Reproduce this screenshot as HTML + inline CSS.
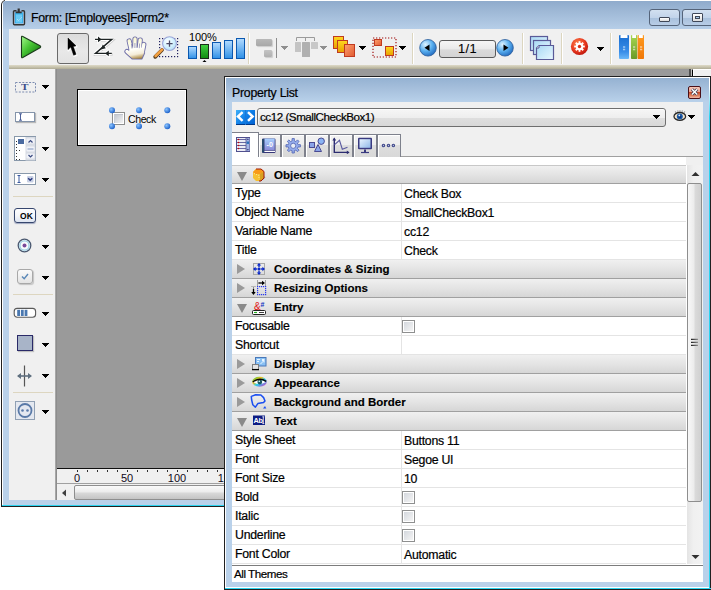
<!DOCTYPE html>
<html><head><meta charset="utf-8">
<style>
*{margin:0;padding:0;box-sizing:border-box}
html,body{width:711px;height:590px;overflow:hidden;background:#fff;font-family:"Liberation Sans",sans-serif;color:#000;position:relative}
div{position:absolute}
svg{display:block}
.t{font-size:12.3px;letter-spacing:-0.25px;white-space:nowrap;line-height:14px;color:#000;-webkit-text-stroke:0.2px #000}
/* main window */
#mw-b{left:1px;top:0;width:720px;height:507px;background:#202020;border-top-left-radius:5px}
#mw-top{left:5px;top:0;width:720px;height:1px;background:#fff}
#mw-w{left:2px;top:1px;width:720px;height:505px;background:#fff;border-top-left-radius:4px}
#mw-f{left:3px;top:1px;width:720px;height:504px;background:#b9d1ea;border-top-left-radius:3px}
#mw-c{left:2px;top:505px;width:720px;height:1px;background:#2ad4f0}
#mtitle{left:3px;top:1px;width:720px;height:28px;background:linear-gradient(#8fabcc,#9cb6d4 30%,#b6cee8);border-top-left-radius:3px}
#tb{left:9px;top:29px;width:710px;height:36px;background:#f0f0f0}
#tan{left:9px;top:65px;width:710px;height:4px;background:linear-gradient(#dedac8,#c8c4ae 50%,#aeaa94)}
#pal{left:9px;top:69px;width:46px;height:431px;background:#f0f0f0}
#palb{left:55px;top:69px;width:2px;height:431px;background:linear-gradient(90deg,#b4b4b4,#808080)}
#canvas{left:57px;top:69px;width:632px;height:399px;background:#9a9a9a}
#ruler{left:57px;top:468px;width:632px;height:16px;background:#f0f0f0;border-top:1px solid #101010;border-bottom:1px solid #a0a0a0}
#hs{left:57px;top:484px;width:632px;height:16px;background:#f0f0f0}
.sep{top:33px;width:2px;height:31px;background:linear-gradient(90deg,#dcd6c0 50%,#fff 50%)}
.dd{width:7px;height:4px;background:linear-gradient(#000,#000) 0 0/7px 1px no-repeat,linear-gradient(#000,#000) 1px 1px/5px 1px no-repeat,linear-gradient(#000,#000) 2px 2px/3px 1px no-repeat,linear-gradient(#000,#000) 3px 3px/1px 1px no-repeat}
.psep{left:13px;width:40px;height:1px;background:#ddd6c0}
/* property window */
#pw-b{left:224px;top:76px;width:500px;height:514px;background:#202020}
#pw-w{left:225px;top:77px;width:485px;height:511px;background:#fff}
#pw-f{left:226px;top:78px;width:483px;height:509px;background:#b9d1ea}
#pw-c{left:225px;top:588px;width:486px;height:1px;background:#2ad4f0}
#pw-cr{left:709px;top:77px;width:1px;height:512px;background:linear-gradient(#fff 0,#fff 10px,#2ad4f0 40px)}
#ptitle{left:226px;top:78px;width:483px;height:24px;background:linear-gradient(#95b2d2,#a4bedb 40%,#b9d1ea)}
#pin{left:232px;top:102px;width:471px;height:480px;background:#f0f0f0}
#pwhite{left:232px;top:157px;width:454px;height:8px;background:#fff}
#tabline{left:232px;top:156px;width:471px;height:1px;background:#a0a0a0}
.tab{top:134px;width:23px;height:22px;background:linear-gradient(#f4f4f4,#e4e4e4 50%,#d8d8d8);border:1px solid #8c8e94;border-bottom:none}
.tab svg{position:absolute;left:2px;top:2px}
#tabsel{left:232px;top:132px;width:27px;height:25px;background:#fff;border-top:1px solid #7e818c;border-right:1px solid #7e818c}
.row{left:232px;width:454px;height:19px;background:#fff;border-bottom:1px solid #e4e4e4}
.row .k{left:3px;top:2px;font-size:12.3px;letter-spacing:-0.25px;line-height:14px;white-space:nowrap;color:#000;-webkit-text-stroke:0.2px #000}
.row .v{left:172px;top:3px;font-size:12.3px;letter-spacing:-0.25px;line-height:14px;white-space:nowrap;color:#000;-webkit-text-stroke:0.2px #000}
.row .vl{left:169px;top:0;width:1px;height:19px;background:#e4e4e4}
.hdr{left:232px;width:454px;height:19px;background:linear-gradient(#f0f0f0,#e4e4e4 50%,#d6d6d6);border-bottom:1px solid #a0a0a0}
.hdr .n{left:42px;top:2px;font-weight:bold;font-size:11.5px;line-height:14px;white-space:nowrap;color:#000;-webkit-text-stroke:0.15px #000}
.hic{position:absolute;left:18px;top:1px}
.tri-r{left:5px;top:4px;width:0;height:0;border-top:5px solid transparent;border-bottom:5px solid transparent;border-left:8px solid #9a9a9a}
.tri-d{left:5px;top:6px;width:0;height:0;border-left:5px solid transparent;border-right:5px solid transparent;border-top:9px solid #8a8a8a}
.cb{left:170px;top:3px;width:13px;height:13px;border:1px solid #8e8f8f;background:#fff}
.cb i{position:absolute;left:1px;top:1px;width:9px;height:9px;background:linear-gradient(135deg,#d4d8de,#f4f4f4)}
#vs{left:686px;top:165px;width:17px;height:400px;background:linear-gradient(90deg,#e4e4e4,#f0f0f0 40%,#f2f2f2);border-left:1px solid #fff}
#thumb{left:687px;top:183px;width:15px;height:319px;border:1px solid #8e8e8e;border-radius:2px;background:linear-gradient(90deg,#f8f8f8,#ececec 45%,#dadada 55%,#d0d0d0)}
#status{left:232px;top:564px;width:471px;height:18px;background:#fff;border-top:1px solid #fff}
#statusl{left:232px;top:565px;width:471px;height:1px;background:#7c7c7c}

.tab2{top:134px;height:23px;border:1px solid #7e818c;border-bottom:none;background:linear-gradient(#f2f2f2,#eeeeee 45%,#dedede 47%,#d8d8d8);box-shadow:inset 1px 1px #fff}
.ddg{opacity:0.4}

</style></head><body>
<!-- MAIN WINDOW -->
<div id="mw-b"></div><div id="mw-top"></div><div id="mw-w"></div><div id="mw-f"></div><div id="mw-c"></div>
<div id="mtitle"></div>
<div id="tb"></div>
<div id="tan"></div>
<div id="pal"></div>
<div id="palb"></div>
<div id="canvas"></div>
<div id="ruler"></div>
<div id="hs"></div>

<!-- title -->
<div class="t" style="left:31px;top:11px">Form: [Employees]Form2*</div>

<!-- title icon -->
<svg style="position:absolute;left:12px;top:8px" width="14" height="18" viewBox="0 0 14 18"><path d="M4.5 2.8H2.5Q1.5 2.8 1.5 3.8V15.8Q1.5 16.8 2.5 16.8H11.5Q12.5 16.8 12.5 15.8V3.8Q12.5 2.8 11.5 2.8H9.5" fill="none" stroke="#333" stroke-width="1.4"/><rect x="3" y="4.3" width="8" height="11" fill="#3ab2ec"/><rect x="4" y="6.5" width="6" height="8" fill="#6ccaf4"/><path d="M5.6 0.6h2.2v3h1.9v1.7H3.7V3.6h1.9Z" fill="#333"/><path d="M5 11l1.5 1.5 3-3" fill="none" stroke="#c8ecfc" stroke-width="1" stroke-dasharray="1 0.8"/></svg>
<!-- min / max -->
<div style="left:649px;top:9px;width:31px;height:17px;border:1px solid #55647a;border-radius:3px;background:linear-gradient(#d2e0f0,#c2d4ea 50%,#a8c0dc 52%,#b8cde6)"></div>
<div style="left:659px;top:17px;width:11px;height:5px;border:1px solid #404858;border-radius:1px;background:linear-gradient(#fff,#ddd)"></div>
<div style="left:682px;top:9px;width:40px;height:17px;border:1px solid #55647a;border-radius:3px;background:linear-gradient(#d2e0f0,#c2d4ea 50%,#a8c0dc 52%,#b8cde6)"></div>
<div style="left:692px;top:13px;width:11px;height:9px;border:1px solid #404858;border-radius:1px;background:linear-gradient(#fff,#ddd)"></div>
<div style="left:695px;top:16px;width:5px;height:3px;border:1px solid #404858;background:#a8c8e8"></div>

<!-- play -->
<svg style="position:absolute;left:19px;top:34px" width="24" height="26" viewBox="0 0 24 26"><defs><linearGradient id="pg" x1="0" y1="0" x2="1" y2="1"><stop offset="0" stop-color="#a4fa8c"/><stop offset="0.45" stop-color="#44c232"/><stop offset="1" stop-color="#0a640a"/></linearGradient></defs><path d="M2.5 3.2Q2.5 1.8 3.8 2.4L21 11.8Q22.4 12.8 21 13.8L3.8 23.6Q2.5 24.2 2.5 22.8Z" fill="url(#pg)" stroke="#1a3a1a" stroke-width="1.1"/></svg>
<!-- selected button -->
<div style="left:57px;top:33px;width:32px;height:31px;border:1px solid #6a6a6a;border-radius:3px;background:linear-gradient(#dcdcdc,#e4e4e4 40%,#e8e8e8 60%,#e2e2e2)"></div>
<svg style="position:absolute;left:65px;top:36px" width="16" height="22" viewBox="0 0 16 22"><path d="M3 2.3V14L5.9 11.4L8.8 19.6L11.4 18.6L8.6 10.9L11.5 10.2Z" fill="#fff" stroke="#fff" stroke-width="1.8" stroke-linejoin="round" opacity="0.8" transform="translate(0.3,0.6)"/><path d="M3 2V13.6L5.8 11L8.6 19.2L11 18.3L8.3 10.6L11 9.8Z" fill="#000" stroke="#000" stroke-width="0.5" stroke-linejoin="round"/></svg>
<!-- Z -->
<svg style="position:absolute;left:90px;top:33px" width="28" height="28" viewBox="0 0 28 28"><path d="M5.5 7.4H22.5L6.5 21.4H22.5" fill="none" stroke="#b8b8b8" stroke-width="2.5" opacity="0.7"/><path d="M5 6.4H21.8L5.5 20.4H21.8" fill="none" stroke="#fff" stroke-width="3.6" stroke-linejoin="round"/><path d="M8 3.2V9.6L12 6.4Z M18.8 17.2V23.6L14.8 20.4Z M10.6 16.6L16.4 15.4L13 11.2Z" fill="#fff" stroke="#fff" stroke-width="1.6"/><path d="M5 6.4H21.8L5.5 20.4H21.8" fill="none" stroke="#1e2424" stroke-width="1.4"/><path d="M8 3.6V9.2L11.6 6.4Z M18.8 17.6V23.2L15.2 20.4Z M10.8 16.4L15.8 15.2L12.8 11.6Z" fill="#1e2424"/></svg>
<!-- hand -->
<svg style="position:absolute;left:122px;top:34px" width="28" height="28" viewBox="0 0 28 28"><defs><linearGradient id="hg" gradientUnits="userSpaceOnUse" x1="10" y1="4" x2="14" y2="26"><stop offset="0" stop-color="#fbf8d0"/><stop offset="0.5" stop-color="#fffffa"/><stop offset="0.75" stop-color="#f4ecd8"/><stop offset="1" stop-color="#9c7424"/></linearGradient></defs>
<g><path d="M7.2 7L9.5 17" stroke="#6c6ca8" stroke-width="5.2" stroke-linecap="round"/><path d="M13 5L12.8 15" stroke="#6c6ca8" stroke-width="5.2" stroke-linecap="round"/><path d="M18.2 6L17.2 15" stroke="#6c6ca8" stroke-width="5.2" stroke-linecap="round"/><path d="M21.8 10.5L20.5 17" stroke="#6c6ca8" stroke-width="5.2" stroke-linecap="round"/><path d="M5 17.5L10 22" stroke="#6c6ca8" stroke-width="5.2" stroke-linecap="round"/><path d="M8.5 14L21.5 14L22 19L19.5 24.5L10.5 24.5L6.5 19Z" fill="#6c6ca8" stroke="#6c6ca8" stroke-width="2.2" stroke-linejoin="round"/></g>
<g><path d="M7.2 7L9.5 17" stroke="url(#hg)" stroke-width="3.4" stroke-linecap="round"/><path d="M13 5L12.8 15" stroke="url(#hg)" stroke-width="3.4" stroke-linecap="round"/><path d="M18.2 6L17.2 15" stroke="url(#hg)" stroke-width="3.4" stroke-linecap="round"/><path d="M21.8 10.5L20.5 17" stroke="url(#hg)" stroke-width="3.4" stroke-linecap="round"/><path d="M5 17.5L10 22" stroke="url(#hg)" stroke-width="3.4" stroke-linecap="round"/><path d="M8.5 14L21.5 14L22 19L19.5 24.5L10.5 24.5L6.5 19Z" fill="url(#hg)" stroke="url(#hg)" stroke-width="0.4"/></g>
<path d="M10 14.5L9.5 10M12.9 14V9M17.3 14.2L17.6 9.5" stroke="#8a8ab8" stroke-width="0.8"/>
</svg>
<!-- magnifier -->
<svg style="position:absolute;left:152px;top:35px" width="28" height="25" viewBox="0 0 28 25"><g fill="#202060"><rect x="7" y="3" width="1.2" height="1.2"/><rect x="7" y="21" width="1.2" height="1.2"/><rect x="10" y="3" width="1.2" height="1.2"/><rect x="10" y="21" width="1.2" height="1.2"/><rect x="13" y="3" width="1.2" height="1.2"/><rect x="13" y="21" width="1.2" height="1.2"/><rect x="16" y="3" width="1.2" height="1.2"/><rect x="16" y="21" width="1.2" height="1.2"/><rect x="19" y="3" width="1.2" height="1.2"/><rect x="19" y="21" width="1.2" height="1.2"/><rect x="22" y="3" width="1.2" height="1.2"/><rect x="22" y="21" width="1.2" height="1.2"/><rect x="25" y="3" width="1.2" height="1.2"/><rect x="25" y="21" width="1.2" height="1.2"/><rect x="7" y="6" width="1.2" height="1.2"/><rect x="25" y="6" width="1.2" height="1.2"/><rect x="7" y="9" width="1.2" height="1.2"/><rect x="25" y="9" width="1.2" height="1.2"/><rect x="7" y="12" width="1.2" height="1.2"/><rect x="25" y="12" width="1.2" height="1.2"/><rect x="7" y="15" width="1.2" height="1.2"/><rect x="25" y="15" width="1.2" height="1.2"/><rect x="7" y="18" width="1.2" height="1.2"/><rect x="25" y="18" width="1.2" height="1.2"/></g><path d="M3.2 21.8L10 15" stroke="#5a4020" stroke-width="3.8" stroke-linecap="round"/><path d="M3.6 21L10 14.6" stroke="#f4a040" stroke-width="2.6" stroke-linecap="round"/><defs><radialGradient id="lg" cx="0.4" cy="0.35" r="0.7"><stop offset="0" stop-color="#ffffff"/><stop offset="0.5" stop-color="#d8f4ff"/><stop offset="1" stop-color="#b4dcf4"/></radialGradient></defs><circle cx="17.5" cy="8.6" r="6.9" fill="url(#lg)" stroke="#9aa4d8" stroke-width="1.1"/><path d="M17.5 5.6V11.8M14.4 8.7H20.6" stroke="#4a4a68" stroke-width="1.3"/></svg>
<!-- 100% -->
<div class="t" style="left:189px;top:31px;font-size:11px;line-height:12px;letter-spacing:-0.1px;-webkit-text-stroke:0">100%</div>
<svg style="position:absolute;left:187px;top:37px" width="60" height="27" viewBox="0 0 60 27"><defs><linearGradient id="bb" x1="0" y1="0" x2="0" y2="1"><stop offset="0" stop-color="#b4dcff"/><stop offset="1" stop-color="#2e90e6"/></linearGradient><linearGradient id="gb" x1="0" y1="0" x2="0" y2="1"><stop offset="0" stop-color="#40d040"/><stop offset="1" stop-color="#108a10"/></linearGradient></defs>
<rect x="1.5" y="9.5" width="8" height="12" fill="url(#bb)" stroke="#0a58b0"/>
<rect x="13.5" y="7.5" width="8" height="14" fill="url(#gb)" stroke="#1a2a1a"/>
<rect x="25.5" y="5.5" width="8" height="16" fill="url(#bb)" stroke="#0a58b0"/>
<rect x="37.5" y="3.5" width="8" height="18" fill="url(#bb)" stroke="#0a58b0"/>
<rect x="49.5" y="1.5" width="8" height="20" fill="url(#bb)" stroke="#0a58b0"/>
<path d="M15.5 25H19.5L17.5 23Z" fill="#000"/></svg>
<div class="sep" style="left:248px"></div>
<!-- gray align icons -->
<div style="left:256px;top:39px;width:16px;height:7px;background:linear-gradient(#b8b8b8,#a8a8a8);border-radius:1px;box-shadow:1px 1px 1px #ccc"></div>
<div style="left:264px;top:50px;width:8px;height:7px;background:linear-gradient(#c4c4c4,#b0b0b0);border-radius:1px;box-shadow:1px 1px 1px #ccc"></div>
<div style="left:276px;top:38px;width:1px;height:20px;background:#8c8c8c"></div>
<div class="dd ddg" style="left:281px;top:46px"></div>
<svg style="position:absolute;left:294px;top:36px" width="26" height="23" viewBox="0 0 26 23"><path d="M2.5 5V1.5H20.5V5M11.5 1.5V5" fill="none" stroke="#9a9a9a"/><rect x="1" y="6" width="6" height="10" fill="#c4c4c4" rx="0.5"/><rect x="8" y="6" width="8" height="15" fill="#b0b0b0" rx="0.5"/><rect x="17" y="6" width="7" height="7" fill="#c8c8c8" rx="0.5"/></svg>
<div class="dd ddg" style="left:320px;top:46px"></div>
<!-- orange stacks -->
<svg style="position:absolute;left:332px;top:35px" width="25" height="23" viewBox="0 0 25 23"><defs><linearGradient id="yo" x1="0" y1="0" x2="0" y2="1"><stop offset="0" stop-color="#ffd820"/><stop offset="1" stop-color="#e8a000"/></linearGradient><linearGradient id="sa" x1="0" y1="0" x2="1" y2="1"><stop offset="0" stop-color="#ffa070"/><stop offset="1" stop-color="#e05a30"/></linearGradient></defs>
<rect x="1.5" y="1.5" width="10" height="12" fill="url(#yo)" stroke="#c03a20"/>
<rect x="5.5" y="5.5" width="10" height="12" fill="url(#yo)" stroke="#c03a20"/>
<rect x="12.5" y="9.5" width="10" height="12" fill="url(#sa)" stroke="#c03a20"/></svg>
<div class="dd" style="left:359px;top:46px"></div>
<svg style="position:absolute;left:372px;top:37px" width="25" height="21" viewBox="0 0 25 21"><path d="M1 1H24V20H1Z" fill="none" stroke="#a01010" stroke-width="1.2" stroke-dasharray="1.3 1.7"/><rect x="2.5" y="2.5" width="7" height="6" fill="url(#sa)" stroke="#c03a20"/><rect x="13.5" y="9.5" width="8" height="9" fill="url(#yo)" stroke="#c03a20"/></svg>
<div class="dd" style="left:399px;top:46px"></div>
<div class="sep" style="left:412px"></div>
<!-- page nav -->
<svg style="position:absolute;left:418px;top:38px" width="20" height="20" viewBox="0 0 20 20"><defs><radialGradient id="bc" cx="0.35" cy="0.3" r="0.8"><stop offset="0" stop-color="#e0f4ff"/><stop offset="0.5" stop-color="#5ab0f0"/><stop offset="1" stop-color="#1a60b8"/></radialGradient></defs><circle cx="10" cy="9.8" r="8.3" fill="url(#bc)" stroke="#2a5a98" stroke-width="0.8"/><path d="M6.5 9.8L11.5 6.5V13Z" fill="#000"/></svg>
<div style="left:439px;top:40px;width:57px;height:18px;border:1px solid #5a5a5a;border-radius:3px;background:linear-gradient(#f6f6f6,#eaeaea 50%,#dadada 55%,#d4d4d4)"></div>
<div class="t" style="left:458px;top:42px;font-size:12.8px;letter-spacing:0.4px;-webkit-text-stroke:0.1px #000">1/1</div>
<svg style="position:absolute;left:495px;top:38px" width="20" height="20" viewBox="0 0 20 20"><circle cx="10" cy="9.8" r="8.3" fill="url(#bc)" stroke="#2a5a98" stroke-width="0.8"/><path d="M13.5 9.8L8.5 6.5V13Z" fill="#000"/></svg>
<div class="sep" style="left:522px"></div>
<!-- windows -->
<svg style="position:absolute;left:529px;top:35px" width="27" height="27" viewBox="0 0 27 27"><defs><linearGradient id="wg" x1="0" y1="0" x2="1" y2="1"><stop offset="0" stop-color="#a8d8f4"/><stop offset="1" stop-color="#eaf8ff"/></linearGradient></defs>
<rect x="1.5" y="1.5" width="17" height="14" fill="url(#wg)" stroke="#5a5a98" stroke-width="1.2"/>
<rect x="4.5" y="5.5" width="17" height="14" fill="url(#wg)" stroke="#5a5a98" stroke-width="1.2"/>
<path d="M10 10.5H24.5V24.5H7.5V13Z" fill="url(#wg)" stroke="#5a5a98" stroke-width="1.2"/><path d="M7.5 13H10V10.5" fill="#fff" stroke="#5a5a98" stroke-width="1"/></svg>
<div class="sep" style="left:561px"></div>
<!-- red gear -->
<svg style="position:absolute;left:569px;top:36px" width="21" height="21" viewBox="0 0 21 21"><defs><radialGradient id="rg" cx="0.4" cy="0.35" r="0.7"><stop offset="0" stop-color="#ff8a50"/><stop offset="0.6" stop-color="#e83a20"/><stop offset="1" stop-color="#b81008"/></radialGradient></defs><circle cx="10.5" cy="10.5" r="8.6" fill="url(#rg)"/><g fill="#fff"><rect x="9.6" y="5.2" width="1.8" height="3" transform="rotate(0 10.5 10.5)"/><rect x="9.6" y="5.2" width="1.8" height="3" transform="rotate(45 10.5 10.5)"/><rect x="9.6" y="5.2" width="1.8" height="3" transform="rotate(90 10.5 10.5)"/><rect x="9.6" y="5.2" width="1.8" height="3" transform="rotate(135 10.5 10.5)"/><rect x="9.6" y="5.2" width="1.8" height="3" transform="rotate(180 10.5 10.5)"/><rect x="9.6" y="5.2" width="1.8" height="3" transform="rotate(225 10.5 10.5)"/><rect x="9.6" y="5.2" width="1.8" height="3" transform="rotate(270 10.5 10.5)"/><rect x="9.6" y="5.2" width="1.8" height="3" transform="rotate(315 10.5 10.5)"/></g><circle cx="10.5" cy="10.5" r="3.7" fill="#fff"/><circle cx="10.5" cy="10.5" r="1.7" fill="#d83018"/></svg>
<div class="dd" style="left:597px;top:47px"></div>
<div class="sep" style="left:610px"></div>
<!-- books -->
<svg style="position:absolute;left:618px;top:34px" width="28" height="27" viewBox="0 0 28 27"><defs><linearGradient id="b1" x1="0" y1="0" x2="0" y2="1"><stop offset="0" stop-color="#1a6ed0"/><stop offset="0.7" stop-color="#3a8ee8"/><stop offset="1" stop-color="#6ab8f8"/></linearGradient><linearGradient id="b2" x1="0" y1="0" x2="0" y2="1"><stop offset="0" stop-color="#a8d850"/><stop offset="1" stop-color="#6a9a28"/></linearGradient><linearGradient id="b3" x1="0" y1="0" x2="0" y2="1"><stop offset="0" stop-color="#ff9a20"/><stop offset="1" stop-color="#f07808"/></linearGradient></defs>
<rect x="1" y="1" width="10" height="24" rx="1" fill="url(#b1)"/><rect x="2.5" y="1" width="7" height="3" fill="#fff"/>
<rect x="13" y="1" width="6.2" height="24" rx="0.8" fill="url(#b2)"/><rect x="14.2" y="1" width="3.8" height="3" fill="#fff"/>
<rect x="19.6" y="1" width="6.4" height="24" rx="0.8" fill="url(#b3)"/><rect x="20.8" y="1" width="4" height="3" fill="#fff"/>
<path d="M5 13h2.2M5 15.5h2.2M15 13h2.2M15 15.5h2.2M22 13h2.2M22 15.5h2.2" stroke="#fff" stroke-width="1.6" opacity="0.55"/></svg>

<!-- T -->
<svg style="position:absolute;left:14px;top:81px" width="22" height="12" viewBox="0 0 22 12"><rect x="1.5" y="1.5" width="20" height="9.5" fill="none" stroke="#7c8cb0" stroke-width="1" stroke-dasharray="2 1.4"/></svg>
<div style="left:21px;top:82px;font:bold 9px 'Liberation Serif';line-height:10px;color:#3a4e8a;transform:scaleX(1.25);transform-origin:0 0">T</div>
<div class="dd" style="left:42px;top:85px"></div>
<!-- text input -->
<div style="left:15px;top:112px;width:20px;height:10px;border:1px solid #8494aa;background:#fff;box-shadow:1px 1px 1px #b8b8b8"></div>
<svg style="position:absolute;left:18px;top:113px" width="5" height="8" viewBox="0 0 5 8"><path d="M1 0.8H4M2.5 0.8V7.2M1 7.2H4" stroke="#3a5090" stroke-width="0.9"/></svg>
<div class="dd" style="left:42px;top:116px"></div>
<!-- list -->
<svg style="position:absolute;left:14px;top:136px" width="23" height="26" viewBox="0 0 23 26"><rect x="0.5" y="0.5" width="21" height="24" fill="#fff" stroke="#8898aa"/><rect x="11.5" y="1" width="10" height="23.5" fill="#d8dce4"/><rect x="4" y="3" width="6" height="5" fill="#4a6aa0"/><path d="M2.5 5v1M2.5 8v1M2.5 11v1M2.5 14v1M2.5 17v1M2.5 20v1M2.5 23v1M5.5 14v1M5.5 23v1" stroke="#333" stroke-width="1"/><rect x="12.5" y="2.5" width="8" height="5" rx="1" fill="#f0f2f8"/><rect x="12.5" y="10.5" width="8" height="5" rx="1" fill="#f0f2f8"/><rect x="13.5" y="12" width="6" height="2" fill="#b8c4dc"/><rect x="12.5" y="17.5" width="8" height="5" rx="1" fill="#f0f2f8"/><path d="M14.5 6.5L16.5 4.5L18.5 6.5M14.5 19L16.5 21L18.5 19" fill="none" stroke="#3a4a80" stroke-width="1.2"/></svg>
<div class="dd" style="left:42px;top:147px"></div>
<!-- combo -->
<svg style="position:absolute;left:14px;top:173px" width="23" height="13" viewBox="0 0 23 13"><rect x="0.5" y="0.5" width="21" height="11" fill="#fff" stroke="#8898aa"/><path d="M3.5 2.5H6.5M5 2.5V9.5M3.5 9.5H6.5" stroke="#3a5aa0"/><rect x="13" y="3" width="6.5" height="6.5" rx="1" fill="#c8d0e4"/><path d="M14.2 5.2L16.2 7.3L18.3 5.2" fill="none" stroke="#2a3a80" stroke-width="1.4"/></svg>
<div class="dd" style="left:42px;top:178px"></div>
<div class="psep" style="top:196px"></div>
<!-- OK -->
<div style="left:14px;top:208px;width:22px;height:15px;border:1.5px solid #36466e;border-radius:3px;background:linear-gradient(#fdfdfd,#f4f6fa 50%,#dde4f0);box-shadow:0 1px 1px #a0a8c0"></div>
<div style="left:20px;top:211px;font:bold 8.5px 'Liberation Sans';line-height:10px;color:#000;letter-spacing:0.2px">OK</div>
<div class="dd" style="left:42px;top:214px"></div>
<!-- radio -->
<svg style="position:absolute;left:17px;top:238px" width="15" height="15" viewBox="0 0 15 15"><circle cx="7.5" cy="7.5" r="6.3" fill="#f8fbfd" stroke="#4a5870" stroke-width="1.3"/><circle cx="7.5" cy="7.5" r="4.6" fill="none" stroke="#9cd0e4" stroke-width="1.4"/><circle cx="7.5" cy="7.5" r="2" fill="#7a4a9a"/></svg>
<div class="dd" style="left:42px;top:245px"></div>
<!-- checkbox -->
<div style="left:17px;top:269px;width:16px;height:15px;border:1px solid #a8a8a8;border-radius:3px;background:linear-gradient(#fafafa,#e4e4e4);box-shadow:1px 1px 1px #c4c4c4"></div>
<svg style="position:absolute;left:20px;top:272px" width="10" height="9" viewBox="0 0 10 9"><path d="M2 4.5L4.2 6.8L8 2" fill="none" stroke="#5a88b8" stroke-width="1.4"/></svg>
<div class="dd" style="left:42px;top:276px"></div>
<div class="psep" style="top:294px"></div>
<!-- progress -->
<svg style="position:absolute;left:13px;top:307px" width="24" height="12" viewBox="0 0 24 12"><rect x="1.2" y="1.4" width="21.4" height="8.8" rx="3" fill="#fff" stroke="#5a5a5a" stroke-width="1.1"/><rect x="4.2" y="2.8" width="2.8" height="6.2" fill="#4a78b0"/><rect x="7.9" y="2.8" width="2.8" height="6.2" fill="#4a78b0"/><rect x="11.6" y="2.8" width="2.8" height="6.2" fill="#4a78b0"/></svg>
<div class="dd" style="left:42px;top:312px"></div>
<!-- rect -->
<div style="left:17px;top:335px;width:16px;height:16px;border:1px solid #2a2a68;background:#a8b4c8;box-shadow:1px 1px 1px #c0c0c0"></div>
<div class="dd" style="left:42px;top:343px"></div>
<!-- splitter -->
<svg style="position:absolute;left:16px;top:365px" width="18" height="22" viewBox="0 0 18 22"><path d="M8.5 0.5V21.5" stroke="#555" stroke-width="1.2"/><path d="M2 11H15" stroke="#607080" stroke-width="1.6"/><path d="M1 11L5 8V14Z M16 11L12 8V14Z" fill="#607080"/></svg>
<div class="dd" style="left:42px;top:374px"></div>
<div class="psep" style="top:392px"></div>
<!-- circle -->
<div style="left:15px;top:401px;width:20px;height:19px;border:1px solid #90a0b4;background:#e4e8f0"></div>
<svg style="position:absolute;left:16px;top:402px" width="18" height="17" viewBox="0 0 18 17"><circle cx="9" cy="8.5" r="6.5" fill="none" stroke="#5a7aa8" stroke-width="1.8"/><circle cx="6.5" cy="8.5" r="1.3" fill="#5a7aa8"/><circle cx="11.5" cy="8.5" r="1.3" fill="#5a7aa8"/></svg>
<div class="dd" style="left:42px;top:410px"></div>

<!-- form rect -->
<div style="left:77px;top:89px;width:110px;height:57px;border:1px solid #000;background:#f0f0f0"></div>
<div style="left:78px;top:90px;width:108px;height:55px;border:1px solid #fff"></div>
<div style="left:112px;top:112px;width:13px;height:13px;border:1px solid #8e8f8f;background:#fff"></div>
<div style="left:114px;top:114px;width:9px;height:9px;background:linear-gradient(135deg,#c4c8d0,#f4f4f4);border-top:1px solid #c0c4cc;border-left:1px solid #c8ccd4"></div>
<div class="t" style="left:128px;top:112px;font-size:10.6px;letter-spacing:-0.45px;-webkit-text-stroke:0">Check</div>
<svg style="position:absolute;left:106px;top:104px" width="66" height="28" viewBox="0 0 66 28"><defs><radialGradient id="hd" cx="0.35" cy="0.35" r="0.7"><stop offset="0" stop-color="#8ac4ff"/><stop offset="1" stop-color="#1a5ec8"/></radialGradient></defs>
<circle cx="6" cy="6.2" r="3" fill="url(#hd)"/><circle cx="33" cy="6.2" r="3" fill="url(#hd)"/><circle cx="61.3" cy="6.2" r="3" fill="url(#hd)"/>
<circle cx="6" cy="22.3" r="3" fill="url(#hd)"/><circle cx="33" cy="22.3" r="3" fill="url(#hd)"/><circle cx="61.3" cy="22.3" r="3" fill="url(#hd)"/></svg>
<!-- right panel piece -->
<div style="left:689px;top:69px;width:3px;height:8px;background:linear-gradient(90deg,#505050,#505050 66%,#c0c0c0 66%)"></div>
<div style="left:692px;top:69px;width:30px;height:8px;background:#f0f0f0;border-left:1px solid #000;border-top:1px solid #fff"></div>
<div style="left:693px;top:69px;width:1px;height:8px;background:#fff"></div>
<!-- ruler -->
<svg style="position:absolute;left:57px;top:469px" width="632" height="15" viewBox="0 0 632 15"><g stroke="#303030" stroke-width="1">
<path d="M20.5 1V3"/><path d="M30.5 1V3"/><path d="M40.5 1V3"/><path d="M50.5 1V3"/><path d="M60.5 1V3"/><path d="M70.5 1V3"/><path d="M80.5 1V3"/><path d="M90.5 1V3"/><path d="M100.5 1V3"/><path d="M110.5 1V3"/><path d="M120.5 1V3"/><path d="M130.5 1V3"/><path d="M140.5 1V3"/><path d="M150.5 1V3"/><path d="M160.5 1V3"/><path d="M170.5 1V3"/><path d="M180.5 1V3"/><path d="M190.5 1V3"/><path d="M200.5 1V3"/><path d="M210.5 1V3"/><path d="M220.5 1V3"/><path d="M230.5 1V3"/><path d="M240.5 1V3"/><path d="M250.5 1V3"/><path d="M260.5 1V3"/><path d="M270.5 1V3"/><path d="M280.5 1V3"/><path d="M290.5 1V3"/><path d="M300.5 1V3"/><path d="M310.5 1V3"/><path d="M320.5 1V3"/><path d="M330.5 1V3"/><path d="M340.5 1V3"/><path d="M350.5 1V3"/><path d="M360.5 1V3"/><path d="M370.5 1V3"/><path d="M380.5 1V3"/><path d="M390.5 1V3"/><path d="M400.5 1V3"/><path d="M410.5 1V3"/><path d="M420.5 1V3"/><path d="M430.5 1V3"/><path d="M440.5 1V3"/><path d="M450.5 1V3"/><path d="M460.5 1V3"/><path d="M470.5 1V3"/><path d="M480.5 1V3"/><path d="M490.5 1V3"/><path d="M500.5 1V3"/><path d="M510.5 1V3"/><path d="M520.5 1V3"/><path d="M530.5 1V3"/><path d="M540.5 1V3"/><path d="M550.5 1V3"/><path d="M560.5 1V3"/><path d="M570.5 1V3"/><path d="M580.5 1V3"/><path d="M590.5 1V3"/><path d="M600.5 1V3"/><path d="M610.5 1V3"/><path d="M620.5 1V3"/><path d="M630.5 1V3"/></g><text x="20" y="13" text-anchor="middle" font-family="Liberation Sans" font-size="11" fill="#10081a">0</text><text x="70" y="13" text-anchor="middle" font-family="Liberation Sans" font-size="11" fill="#10081a">50</text><text x="120" y="13" text-anchor="middle" font-family="Liberation Sans" font-size="11" fill="#10081a">100</text><text x="170" y="13" text-anchor="middle" font-family="Liberation Sans" font-size="11" fill="#10081a">150</text><text x="220" y="13" text-anchor="middle" font-family="Liberation Sans" font-size="11" fill="#10081a">200</text><text x="270" y="13" text-anchor="middle" font-family="Liberation Sans" font-size="11" fill="#10081a">250</text><text x="320" y="13" text-anchor="middle" font-family="Liberation Sans" font-size="11" fill="#10081a">300</text><text x="370" y="13" text-anchor="middle" font-family="Liberation Sans" font-size="11" fill="#10081a">350</text><text x="420" y="13" text-anchor="middle" font-family="Liberation Sans" font-size="11" fill="#10081a">400</text><text x="470" y="13" text-anchor="middle" font-family="Liberation Sans" font-size="11" fill="#10081a">450</text><text x="520" y="13" text-anchor="middle" font-family="Liberation Sans" font-size="11" fill="#10081a">500</text><text x="570" y="13" text-anchor="middle" font-family="Liberation Sans" font-size="11" fill="#10081a">550</text><text x="620" y="13" text-anchor="middle" font-family="Liberation Sans" font-size="11" fill="#10081a">600</text></svg>
<!-- h scrollbar -->
<svg style="position:absolute;left:60px;top:489px" width="8" height="8" viewBox="0 0 8 8"><path d="M2 4L6 0.5V7.5Z" fill="#404040"/></svg>
<div style="left:74px;top:485px;width:620px;height:15px;border:1px solid #8e8e8e;border-radius:2px;background:linear-gradient(#fafafa,#ececec 45%,#d8d8d8 55%,#c4c4c4)"></div>


<!-- PROPERTY WINDOW -->
<div id="pw-b"></div><div id="pw-w"></div><div id="pw-f"></div><div id="pw-c"></div><div id="pw-cr"></div>
<div id="ptitle"></div>
<div class="t" style="left:232px;top:86px">Property List</div>
<div id="pin"></div>
<div id="tabline"></div>
<div style="left:688px;top:86px;width:13px;height:13px;border:1px solid #4a1018;border-radius:2px;background:linear-gradient(#f8c8b8,#e8a090 45%,#c84828 50%,#e08868 80%,#f0b8a8)"></div>
<svg style="position:absolute;left:690px;top:88px" width="9" height="9" viewBox="0 0 9 9"><path d="M2 1.3L7.2 6.5M7.2 1.3L2 6.5" stroke="#3a3a50" stroke-width="2.9"/><path d="M2 1.3L7.2 6.5M7.2 1.3L2 6.5" stroke="#fff" stroke-width="1.5"/></svg>
<div style="left:236px;top:110px;width:19px;height:15px;background:linear-gradient(135deg,#40b0f8,#1080e8 50%,#0060d0);border-bottom:1px solid #003888"></div>
<div style="left:245px;top:110px;width:1px;height:15px;background:#1a78d8"></div>
<svg style="position:absolute;left:236px;top:110px" width="19" height="15" viewBox="0 0 19 15"><path d="M6.6 2.2L2 6.5L6.6 10.8M12 2.2L16.6 6.5L12 10.8" fill="none" stroke="#fff" stroke-width="2.5"/></svg>
<div style="left:257px;top:108px;width:409px;height:19px;border:1px solid #6e6e6e;border-radius:3px;background:linear-gradient(#f6f6f6,#eeeeee 50%,#dedede 55%,#d8d8d8)"></div>
<div style="left:257px;top:108px;width:409px;height:19px;border-radius:3px;border-top:1px solid #fff;border-left:1px solid #fff;transform:translate(1px,1px);width:407px;height:17px;opacity:.7"></div>
<div class="t" style="left:260px;top:110px;font-size:11.6px;letter-spacing:-0.45px">cc12 (SmallCheckBox1)</div>
<div class="dd" style="left:653px;top:115px"></div>
<svg style="position:absolute;left:673px;top:109px" width="14" height="14" viewBox="0 0 14 14"><path d="M3 4.2L2.3 2.2M5 3.4L4.8 1.3M7 3.2V1.1M9 3.4L9.3 1.3M11 4.2L11.8 2.2" stroke="#8a8a8a" stroke-width="0.8"/><ellipse cx="6.8" cy="7.4" rx="5.8" ry="3.9" fill="#f4e4cc" stroke="#2a2a2a" stroke-width="1.3"/><circle cx="6.8" cy="7.4" r="3" fill="#1a5aa8"/><circle cx="6.8" cy="7.6" r="1.6" fill="#0c3a80"/><circle cx="6.3" cy="6.4" r="0.9" fill="#e8f4ff"/></svg>
<div class="dd" style="left:688px;top:115px"></div>

<div id="pwhite"></div>
<div id="tabsel"></div>
<div class="tab2" style="left:258px;width:23px"></div>
<div class="tab2" style="left:281px;width:24px"></div>
<div class="tab2" style="left:305px;width:24px"></div>
<div class="tab2" style="left:329px;width:24px"></div>
<div class="tab2" style="left:353px;width:24px"></div>
<div class="tab2" style="left:377px;width:24px"></div>
<!-- tab icons -->
<svg style="position:absolute;left:236px;top:137px" width="14" height="15" viewBox="0 0 14 15"><rect x="0.5" y="0.5" width="13" height="14" fill="#ececf4" stroke="#50508e"/><path d="M1 2.5H10M1 5.5H10M1 8.5H10M1 11.5H10" stroke="#5a5a98" stroke-width="0.9"/><rect x="10" y="1" width="3.5" height="13" fill="#a4b4e4"/><path d="M10 0.5V14.5" stroke="#50508e" stroke-width="0.8"/><circle cx="2.5" cy="2.5" r="0.8" fill="#c00"/><circle cx="2.5" cy="5.5" r="0.8" fill="#c00"/><circle cx="2.5" cy="8.5" r="0.8" fill="#c00"/><circle cx="2.5" cy="11.5" r="0.8" fill="#c00"/><rect x="10.6" y="4.5" width="2.4" height="2.4" fill="#2a70b8"/><path d="M10.6 2.8L11.8 1.4L13 2.8Z M10.6 12.2L11.8 13.6L13 12.2Z" fill="#2a2a70"/></svg>
<svg style="position:absolute;left:261px;top:137px" width="16" height="17" viewBox="0 0 16 17"><defs><linearGradient id="bk" x1="0" y1="0" x2="0" y2="1"><stop offset="0" stop-color="#a8d0ff"/><stop offset="1" stop-color="#8a8ad8"/></linearGradient></defs><rect x="1" y="1.5" width="13.5" height="14.5" rx="1.2" fill="#363678"/><rect x="1" y="2" width="2.2" height="13.5" fill="#2a4a70"/><rect x="3.5" y="1.6" width="10.2" height="11.6" fill="url(#bk)"/><rect x="3.4" y="13.8" width="10.6" height="1.2" fill="#fff"/><text x="5.6" y="10" font-family="Liberation Sans" font-size="7" font-weight="bold" fill="#fff">-0</text></svg>
<svg style="position:absolute;left:285px;top:137px" width="17" height="18" viewBox="0 0 17 18"><path d="M13.08 7.71 L15.41 7.64 L15.41 9.96 L13.08 9.89 L12.42 11.48 L14.12 13.07 L12.47 14.72 L10.88 13.02 L9.29 13.68 L9.36 16.01 L7.04 16.01 L7.11 13.68 L5.52 13.02 L3.93 14.72 L2.28 13.07 L3.98 11.48 L3.32 9.89 L0.99 9.96 L0.99 7.64 L3.32 7.71 L3.98 6.12 L2.28 4.53 L3.93 2.88 L5.52 4.58 L7.11 3.92 L7.04 1.59 L9.36 1.59 L9.29 3.92 L10.88 4.58 L12.47 2.88 L14.12 4.53 L12.42 6.12Z" fill="#94acec" stroke="#5a6cb8" stroke-width="0.9" stroke-linejoin="round"/><circle cx="8.2" cy="8.8" r="2.6" fill="#e8ecf4" stroke="#5a6cb8" stroke-width="0.9"/></svg>
<svg style="position:absolute;left:308px;top:136px" width="18" height="17" viewBox="0 0 18 17"><rect x="1.5" y="6.5" width="5" height="5" fill="#8aa4e8" stroke="#4a4a92"/><circle cx="13.2" cy="5.2" r="3.2" fill="#8ab4f4" stroke="#4a4a92"/><path d="M10 8.5L13.5 15.5H6.5Z" fill="#8aa4e8" stroke="#4a4a92" stroke-linejoin="round"/></svg>
<svg style="position:absolute;left:331px;top:137px" width="19" height="17" viewBox="0 0 19 17"><path d="M3.3 1.5V15.4H17.5" fill="none" stroke="#2c2c70" stroke-width="1.4"/><path d="M3.3 0.6L1.4 3.4H5.2Z M18.6 15.4L15.8 13.5V17.3Z" fill="#2c2c70"/><path d="M3.6 7.6L8.5 3.3L11.3 12.2L16.5 10.3" fill="none" stroke="#5a5aa0" stroke-width="1.1"/></svg>
<svg style="position:absolute;left:357px;top:137px" width="16" height="17" viewBox="0 0 16 17"><rect x="1" y="0.8" width="14" height="11.5" rx="1" fill="#3a3a80"/><rect x="2.5" y="2.2" width="11" height="8.6" fill="url(#mon)"/><path d="M7 12.5H9V15H7Z" fill="#3a3a80"/><path d="M4 15.5H12" stroke="#3a3a80" stroke-width="1.2"/><defs><linearGradient id="mon" x1="0" y1="0" x2="1" y2="1"><stop offset="0" stop-color="#e8f4ff"/><stop offset="1" stop-color="#90b8e8"/></linearGradient></defs></svg>
<svg style="position:absolute;left:381px;top:143px" width="16" height="5" viewBox="0 0 16 5"><circle cx="2.5" cy="2.5" r="1.2" fill="#b8c0e0" stroke="#40488a" stroke-width="1.1"/><circle cx="7.5" cy="2.5" r="1.2" fill="#b8c0e0" stroke="#40488a" stroke-width="1.1"/><circle cx="12.4" cy="2.5" r="1.2" fill="#b8c0e0" stroke="#40488a" stroke-width="1.1"/></svg>
<div style="left:232px;top:165px;width:454px;height:1px;background:#c8c8c8"></div>
<div class="hdr" style="top:166px;height:18px"><div class="tri-d"></div><svg class="hic" width="18" height="17" viewBox="0 0 18 17"><path d="M13.5 8.5L15.5 10.5L13 13Z" fill="#8a8a8a" opacity="0.6"/><path d="M3 5L6 2H11L14 4.5V11L11 14H6L3 11Z" fill="#f6c030"/><path d="M3 5L6 2H11L14 4.5L10 7H5Z" fill="#f89a18"/><path d="M10 7L14 4.5V11L11 14H10Z" fill="#d8a020"/><path d="M6 2H11L14 4.5V11L11 14H9" fill="none" stroke="#a01808" stroke-width="1"/><path d="M4 6.5L9 8.5V12.5" fill="none" stroke="#fff0a0" stroke-width="0.9" stroke-dasharray="1 1.3"/></svg><div class="n">Objects</div></div>
<div class="row" style="top:184px"><div class="k">Type</div><div class="vl"></div><div class="v">Check Box</div></div>
<div class="row" style="top:203px"><div class="k">Object Name</div><div class="vl"></div><div class="v">SmallCheckBox1</div></div>
<div class="row" style="top:222px"><div class="k">Variable Name</div><div class="vl"></div><div class="v">cc12</div></div>
<div class="row" style="top:241px"><div class="k">Title</div><div class="vl"></div><div class="v">Check</div></div>
<div class="hdr" style="top:260px"><div class="tri-r"></div><svg class="hic" width="18" height="17" viewBox="0 0 18 17"><rect x="3.5" y="2.5" width="11" height="11" fill="none" stroke="#a8a8a8"/><g fill="#0a28c8"><path d="M9 2L6.8 4.6H11.2Z M9 14L6.8 11.4H11.2Z M3 8L5.6 5.8V10.2Z M15 8L12.4 5.8V10.2Z"/><rect x="8.3" y="4" width="1.4" height="2.6"/><rect x="8.3" y="9.4" width="1.4" height="2.6"/><rect x="5" y="7.3" width="2.6" height="1.4"/><rect x="10.4" y="7.3" width="2.6" height="1.4"/><rect x="8" y="7" width="2" height="2"/></g></svg><div class="n">Coordinates &amp; Sizing</div></div>
<div class="hdr" style="top:279px"><div class="tri-r"></div><svg class="hic" width="18" height="17" viewBox="0 0 18 17"><path d="M7.5 0V6M15.5 0V6" stroke="#a0a0a0"/><path d="M9 3H13.5" stroke="#000" stroke-width="1.3"/><path d="M15 3L12 0.8V5.2Z" fill="#000"/><rect x="8" y="2.5" width="1" height="1" fill="#333"/><path d="M1 6.5H6" stroke="#b8b8b8"/><rect x="3" y="7.5" width="1" height="1" fill="#333"/><path d="M3.5 9V13" stroke="#000" stroke-width="1.3"/><path d="M3.5 15L1.3 12H5.7Z" fill="#000"/><g fill="#2a3af0"><rect x="7" y="6" width="1.2" height="1.2"/><rect x="9" y="6" width="1.2" height="1.2"/><rect x="11" y="6" width="1.2" height="1.2"/><rect x="13" y="6" width="1.2" height="1.2"/><rect x="15" y="6" width="1.2" height="1.2"/><rect x="7" y="8" width="1.2" height="1.2"/><rect x="15" y="8" width="1.2" height="1.2"/><rect x="7" y="10" width="1.2" height="1.2"/><rect x="15" y="10" width="1.2" height="1.2"/><rect x="7" y="12" width="1.2" height="1.2"/><rect x="15" y="12" width="1.2" height="1.2"/><rect x="7" y="14" width="1.2" height="1.2"/><rect x="9" y="14" width="1.2" height="1.2"/><rect x="11" y="14" width="1.2" height="1.2"/><rect x="13" y="14" width="1.2" height="1.2"/><rect x="15" y="14" width="1.2" height="1.2"/></g></svg><div class="n">Resizing Options</div></div>
<div class="hdr" style="top:298px"><div class="tri-d"></div><svg class="hic" width="18" height="17" viewBox="0 0 18 17"><text x="4" y="11" font-family="Liberation Sans" font-size="10" fill="#e01010">&amp;</text><text x="10.5" y="7.5" font-family="Liberation Sans" font-weight="bold" font-size="7" fill="#1030c0">#</text><rect x="2.5" y="11.5" width="13" height="4" rx="1" fill="#fff" stroke="#202020"/><path d="M4 13.5H7" stroke="#20b020" stroke-width="1.2"/><path d="M9 13.5H14" stroke="#404040" stroke-width="1"/></svg><div class="n">Entry</div></div>
<div class="row" style="top:317px"><div class="k">Focusable</div><div class="vl"></div><div class="cb"><i></i></div></div>
<div class="row" style="top:336px"><div class="k">Shortcut</div><div class="vl"></div><div class="v"></div></div>
<div class="hdr" style="top:355px"><div class="tri-r"></div><svg class="hic" width="18" height="17" viewBox="0 0 18 17"><rect x="5.5" y="1.5" width="10.5" height="8.5" fill="#88c0f4" stroke="#4a78b8"/><path d="M7 3.5h3M12 3.5h2.5M7 5.5h2M10.5 8L14 4.5M12 4.5h2v2" stroke="#f4faff" stroke-width="0.9" fill="none"/><rect x="2.5" y="8.5" width="6" height="5" fill="#e4e4e4" stroke="#808080"/><path d="M2 13.6H9" stroke="#000" stroke-width="1.3"/></svg><div class="n">Display</div></div>
<div class="hdr" style="top:374px"><div class="tri-r"></div><svg class="hic" width="18" height="17" viewBox="0 0 18 17"><defs><linearGradient id="rb" x1="0" y1="0" x2="1" y2="1"><stop offset="0" stop-color="#20d040"/><stop offset="0.35" stop-color="#f0c020"/><stop offset="0.55" stop-color="#20d0f0"/><stop offset="1" stop-color="#f020c0"/></linearGradient></defs><ellipse cx="9.5" cy="6.8" rx="7.3" ry="5" fill="url(#rb)"/><path d="M3.2 7Q9.5 2.8 15.8 7Q9.5 11 3.2 7Z" fill="#fff"/><circle cx="9.8" cy="7.1" r="2.4" fill="#1a5a60"/><circle cx="9.3" cy="6.3" r="0.8" fill="#e8ffff"/><path d="M2.8 7Q9.5 1.8 16.2 6.4" fill="none" stroke="#080808" stroke-width="1.4"/></svg><div class="n">Appearance</div></div>
<div class="hdr" style="top:393px"><div class="tri-r"></div><svg class="hic" width="18" height="17" viewBox="0 0 18 17"><path d="M1.3 2.4L5.7 0.8L10.9 1L13.6 3.6L15 7L13.4 8.6L7.8 9.6L5.4 13.2L2.8 10.8L1.6 5.8Z" fill="none" stroke="#1a4ef0" stroke-width="1.5" stroke-linejoin="round"/><path d="M13 14.5L15 12L16.3 14.5Z" fill="#1a4ef0"/></svg><div class="n">Background and Border</div></div>
<div class="hdr" style="top:412px"><div class="tri-d"></div><svg class="hic" width="18" height="17" viewBox="0 0 18 17"><rect x="3" y="2.5" width="12" height="9.5" fill="#0c1c84"/><text x="3.5" y="10.4" font-family="Liberation Sans" font-weight="bold" font-size="7.4" fill="#fff" letter-spacing="-0.3">Ab</text><path d="M12.3 3.8h2M13.3 3.8V10.6M12.3 10.6h2" stroke="#fff" stroke-width="0.8"/></svg><div class="n">Text</div></div>
<div class="row" style="top:431px"><div class="k">Style Sheet</div><div class="vl"></div><div class="v">Buttons 11</div></div>
<div class="row" style="top:450px"><div class="k">Font</div><div class="vl"></div><div class="v">Segoe UI</div></div>
<div class="row" style="top:469px"><div class="k">Font Size</div><div class="vl"></div><div class="v">10</div></div>
<div class="row" style="top:488px"><div class="k">Bold</div><div class="vl"></div><div class="cb"><i></i></div></div>
<div class="row" style="top:507px"><div class="k">Italic</div><div class="vl"></div><div class="cb"><i></i></div></div>
<div class="row" style="top:526px"><div class="k">Underline</div><div class="vl"></div><div class="cb"><i></i></div></div>
<div class="row" style="top:545px"><div class="k">Font Color</div><div class="vl"></div><div class="v">Automatic</div></div>
<div id="vs"></div>
<div id="thumb"></div>
<div id="status"><div class="t" style="left:2px;top:2px;font-size:11.6px;letter-spacing:-0.45px">All Themes</div></div><div id="statusl"></div>
<svg style="position:absolute;left:691px;top:171px" width="9" height="6" viewBox="0 0 9 6"><path d="M0.5 5L4.5 1L8.5 5Z" fill="#303030"/></svg>
<svg style="position:absolute;left:691px;top:554px" width="9" height="6" viewBox="0 0 9 6"><path d="M0.5 1L4.5 5L8.5 1Z" fill="#303030"/></svg>
<svg style="position:absolute;left:690px;top:337px" width="10" height="10" viewBox="0 0 10 10"><defs><linearGradient id="gl" x1="0" y1="0" x2="1" y2="0"><stop offset="0" stop-color="#202020"/><stop offset="1" stop-color="#909090"/></linearGradient></defs><path d="M1 2.3H8M1 5.3H8M1 8.3H8" stroke="url(#gl)" stroke-width="1.3"/></svg>

</body></html>
